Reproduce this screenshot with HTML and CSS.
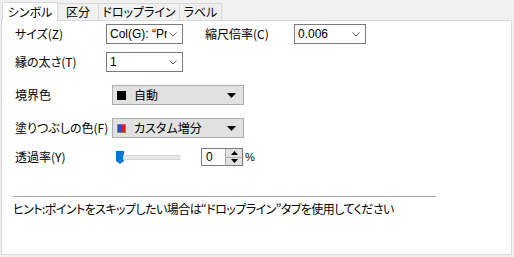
FILE: index.html
```html
<!DOCTYPE html>
<html lang="ja">
<head>
<meta charset="utf-8">
<link rel="stylesheet" href="styles.css">
</head>
<body>
<div class="tabs">
  <div class="tab active" style="width:56px">シンボル</div>
  <div class="tab" style="width:41px">区分</div>
  <div class="tab" style="width:81px">ドロップライン</div>
  <div class="tab" style="width:42px">ラベル</div>
</div>
<div class="panel">
  <div class="row r1">
    <span class="label l1">サイズ(Z)</span>
    <div class="combo c1"><span class="ctext latin">Col(G): “Pr</span><svg class="chev" width="8" height="5" viewBox="0 0 8 5"><polyline points="0.5,0.5 4,4 7.5,0.5" fill="none" stroke="#606060" stroke-width="1"/></svg></div>
    <span class="label l2">縮尺倍率(C)</span>
    <div class="combo c2"><span class="ctext latin">0.006</span><svg class="chev" width="8" height="5" viewBox="0 0 8 5"><polyline points="0.5,0.5 4,4 7.5,0.5" fill="none" stroke="#606060" stroke-width="1"/></svg></div>
  </div>
  <div class="row r2">
    <span class="label l1">縁の太さ(T)</span>
    <div class="combo c1"><span class="ctext latin">1</span><svg class="chev" width="8" height="5" viewBox="0 0 8 5"><polyline points="0.5,0.5 4,4 7.5,0.5" fill="none" stroke="#606060" stroke-width="1"/></svg></div>
  </div>
  <div class="row r3">
    <span class="label l3">境界色</span>
    <div class="drop"><span class="swatch black"></span><span class="dtext">自動</span><svg class="tri" width="9" height="5" viewBox="0 0 9 5"><polygon points="0,0 9,0 4.5,5" fill="#000"/></svg></div>
  </div>
  <div class="row r4">
    <span class="label l3">塗りつぶしの色(F)</span>
    <div class="drop"><span class="swatch split"><i class="sb"></i><i class="sr"></i></span><span class="dtext">カスタム増分</span><svg class="tri" width="9" height="5" viewBox="0 0 9 5"><polygon points="0,0 9,0 4.5,5" fill="#000"/></svg></div>
  </div>
  <div class="row r5">
    <span class="label l4">透過率(Y)</span>
    <div class="slider">
      <svg class="thumb" width="8" height="13" viewBox="0 0 8 13"><polygon points="0,0 8,0 8,10 4,13 0,10" fill="#0078d7"/></svg>
      <div class="track"></div>
    </div>
    <div class="spin">
      <span class="sval latin">0</span>
      <div class="sbtns">
        <div class="sbtn"><svg width="7" height="4" viewBox="0 0 7 4"><polygon points="3.5,0 7,4 0,4" fill="#000"/></svg></div>
        <div class="sbtn"><svg width="7" height="4" viewBox="0 0 7 4"><polygon points="0,0 7,0 3.5,4" fill="#000"/></svg></div>
      </div>
    </div>
    <span class="pct latin">%</span>
  </div>
  <div class="sep"></div>
  <div class="hint">ヒント:ポイントをスキップしたい場合は“ドロップライン”タブを使用してください</div>
</div>
</body>
</html>
```
FILE: styles.css
```css
html, body {
  margin: 0;
  padding: 0;
}
body {
  width: 514px;
  height: 257px;
  background: #f0f0f0;
  font-family: "Noto Sans CJK JP", "Noto Sans", sans-serif;
  font-size: 12px;
  color: #000;
  font-feature-settings: "palt";
  overflow: hidden;
}
.latin {
  font-family: "Liberation Sans", "DejaVu Sans", sans-serif;
  font-feature-settings: normal;
}
.tabs {
  display: flex;
  align-items: flex-end;
  height: 20px;
  padding-left: 2px;
  box-sizing: border-box;
}
.tab {
  box-sizing: border-box;
  height: 17px;
  border: 1px solid #d9d9d9;
  border-bottom: none;
  border-left: none;
  background: #f0f0f0;
  display: flex;
  align-items: center;
  justify-content: center;
  line-height: 1;
}
.tab.active {
  position: relative;
  z-index: 1;
  height: 19px;
  margin-bottom: -1px;
  border-left: 1px solid #d9d9d9;
  background: #fff;
  padding-bottom: 1px;
}
.panel {
  box-sizing: border-box;
  margin-left: 1px;
  width: 511px;
  height: 235px;
  background: #fff;
  border: 1px solid #d9d9d9;
  padding-left: 13px;
  display: flex;
  flex-direction: column;
}
.row {
  display: flex;
  align-items: center;
  height: 20px;
  flex: none;
}
.r1 { margin-top: 3px; }
.r2 { margin-top: 8px; }
.r3 { margin-top: 13px; }
.r4 { margin-top: 13px; }
.r5 { margin-top: 10px; height: 18px; }
.label {
  flex: none;
  white-space: nowrap;
  line-height: 14px;
}
.l1 { width: 91px; }
.l2 { width: 89px; margin-left: 22px; }
.l3 { width: 97px; }
.l4 { width: 101px; }
.combo {
  box-sizing: border-box;
  height: 20px;
  border: 1px solid #7a7a7a;
  background: #fff;
  display: flex;
  align-items: center;
  padding-left: 3px;
  padding-right: 5px;
  flex: none;
}
.c1 { width: 77px; }
.c2 { width: 72px; }
.ctext {
  flex: 1;
  overflow: hidden;
  white-space: nowrap;
  font-size: 12px;
}
.chev { flex: none; margin-left: 2px; }
.drop {
  box-sizing: border-box;
  width: 132px;
  height: 20px;
  border: 1px solid #adadad;
  background: #e1e1e1;
  display: flex;
  align-items: center;
  padding-left: 4px;
  padding-right: 7px;
  flex: none;
}
.swatch {
  width: 9px;
  height: 9px;
  box-sizing: border-box;
  flex: none;
  display: flex;
}
.swatch.black { background: #000; }
.swatch.split { border: 1px solid #7f7f7f; }
.sb { flex: 1; background: #1f4ed8; }
.sr { flex: 1; background: #e01b1b; }
.dtext {
  flex: 1;
  margin-left: 8px;
  line-height: 14px;
}
.tri { flex: none; }
.slider {
  display: flex;
  align-items: center;
  width: 64px;
  flex: none;
}
.thumb { flex: none; margin-top: 1px; }
.track {
  width: 56px;
  height: 3px;
  background: #e7e7e7;
  border: 1px solid #d6d6d6;
  box-sizing: content-box;
  margin-left: -1px;
}
.spin {
  margin-left: 21px;
  box-sizing: border-box;
  width: 42px;
  height: 18px;
  border: 1px solid #7a7a7a;
  display: flex;
  flex: none;
}
.sval {
  flex: 1;
  padding-left: 4px;
  line-height: 16px;
}
.sbtns {
  width: 16px;
  display: flex;
  flex-direction: column;
  border-left: 1px solid #adadad;
}
.sbtn {
  flex: 1;
  background: #e1e1e1;
  display: flex;
  align-items: center;
  justify-content: center;
}
.sbtn + .sbtn { border-top: 1px solid #adadad; }
.pct {
  margin-left: 2px;
  font-size: 11px;
}
.sep {
  flex: none;
  margin-top: 30px;
  margin-left: -2px;
  width: 423px;
  height: 1px;
  background: #a0a0a0;
}
.hint {
  margin-top: 5px;
  margin-left: -2px;
  line-height: 14px;
  white-space: nowrap;
  letter-spacing: -0.55px;
}
```
